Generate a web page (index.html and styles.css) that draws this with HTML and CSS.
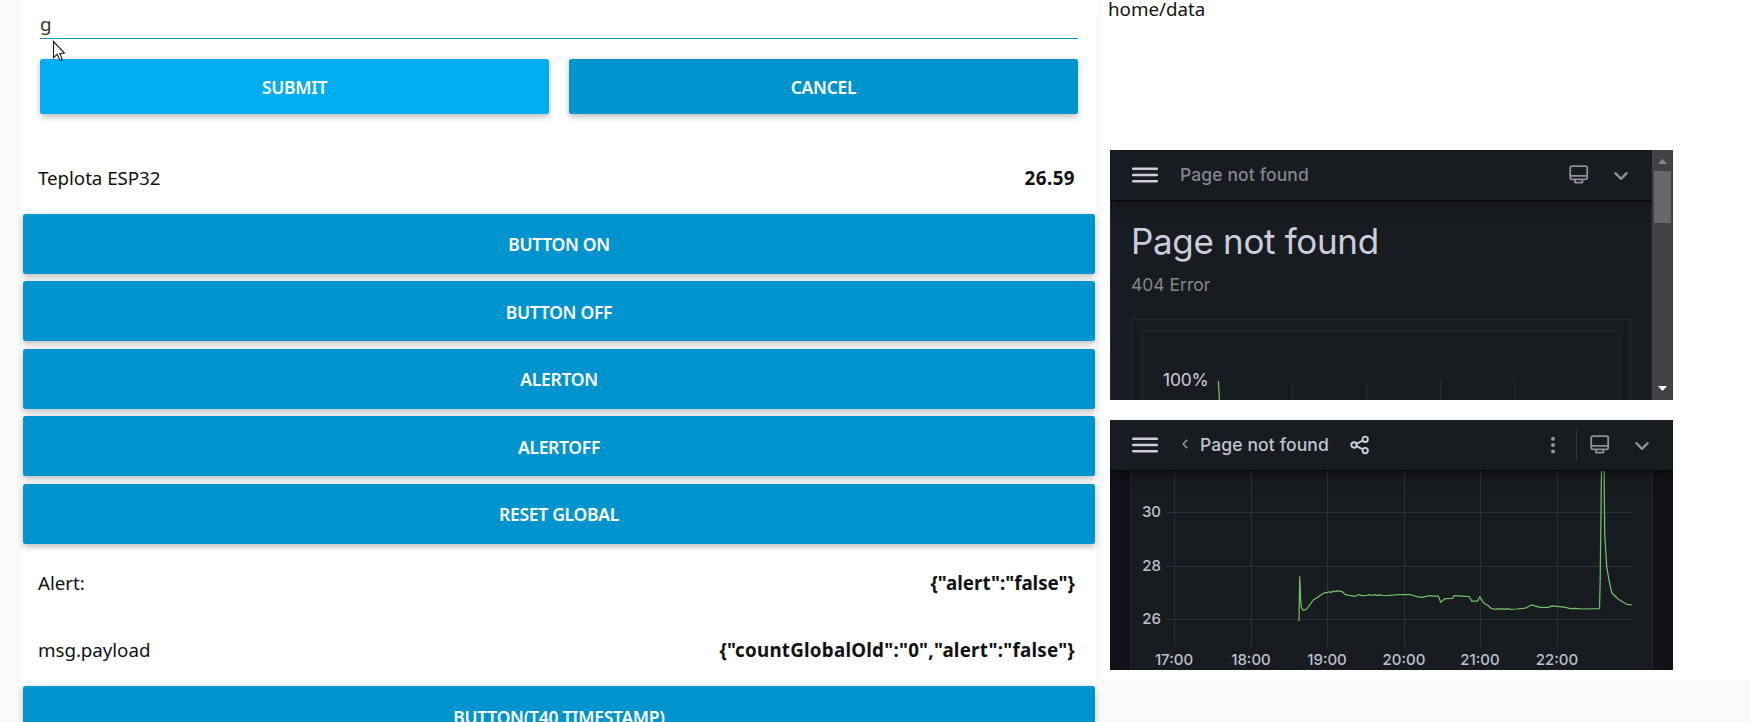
FILE: index.html
```html
<!DOCTYPE html>
<html lang="en">
<head>
<meta charset="utf-8">
<title>Dashboard</title>
<link rel="stylesheet" href="styles.css">
</head>
<body>
<main class="dashboard">
  <section class="group controls">
    <form class="form">
      <div class="field"><span class="field-value">g</span></div>
      <div class="form-actions">
        <button type="button" class="btn btn-hover">SUBMIT</button>
        <button type="button" class="btn">CANCEL</button>
      </div>
    </form>
    <div class="row"><span class="label">Teplota ESP32</span><b class="value num">26.59</b></div>
    <button class="btn wide">BUTTON ON</button>
    <button class="btn wide">BUTTON OFF</button>
    <button class="btn wide">ALERTON</button>
    <button class="btn wide">ALERTOFF</button>
    <button class="btn wide">RESET GLOBAL</button>
    <div class="row"><span class="label">Alert:</span><b class="value">{"alert":"false"}</b></div>
    <div class="row"><span class="label">msg.payload</span><b class="value payload">{"countGlobalOld":"0","alert":"false"}</b></div>
    <button class="btn wide">BUTTON(T40 TIMESTAMP)</button>
  </section>

  <section class="group frames">
    <div class="topic">home/data</div>

    <div class="frame">
      <div class="view view-error">
        <header class="bar">
          <svg class="menu" viewBox="0 0 26 18"><path d="M1.2 2.8H24.8M1.2 9H24.8M1.2 15.2H24.8"/></svg>
          <span class="crumb muted">Page not found</span>
          <span class="spacer"></span>
          <svg class="monitor" viewBox="0 0 20 20"><rect x="1.2" y="1.2" width="17" height="13.2" rx="1.8"/><path d="M1.2 10.8H18.2M6 14.4V17.6H13.4V14.4"/></svg>
          <svg class="chevron" viewBox="0 0 16 12"><path d="M2.4 3.2L8 8.8L13.6 3.2"/></svg>
        </header>
        <div class="error-body">
          <h1 class="error-title">Page not found</h1>
          <p class="error-code">404 Error</p>
          <div class="outer-box">
            <div class="inner-box">
              <svg class="mini-chart" viewBox="1143 331 476 69">
                <text x="1163" y="386">100%</text>
                <path class="mini-grid" d="M1292.3 381V400M1366.5 381V400M1440.5 381V400M1515 381V400"/>
                <path class="mini-line" d="M1218.4 381L1219.4 400"/>
              </svg>
            </div>
          </div>
        </div>
      </div>
      <div class="scrollbar">
        <svg class="arrow" viewBox="0 0 21 21"><path fill="#868686" d="M6 14L10.5 9L15 14Z"/></svg>
        <div class="thumb"></div>
        <svg class="arrow arrow-down" viewBox="0 0 21 21"><path fill="#fff" d="M6 7L15 7L10.5 12Z"/></svg>
      </div>
    </div>

    <div class="frame">
      <div class="view view-chart">
        <header class="bar bar-chart">
          <svg class="menu" viewBox="0 0 26 18"><path d="M1.2 2.8H24.8M1.2 9H24.8M1.2 15.2H24.8"/></svg>
          <svg class="back" viewBox="0 0 8 12"><path d="M6.2 .8L2.2 5L6.2 9.2"/></svg>
          <span class="crumb">Page not found</span>
          <svg class="share" viewBox="0 0 20 20"><circle cx="4" cy="10" r="2.7"/><circle cx="15.2" cy="4.3" r="2.7"/><circle cx="15.2" cy="15.6" r="2.7"/><path d="M6.5 8.8L12.8 5.5M6.5 11.2L12.8 14.4"/></svg>
          <span class="spacer"></span>
          <svg class="dots" viewBox="0 0 6 20"><circle cx="3" cy="3.8" r="2"/><circle cx="3" cy="10" r="2"/><circle cx="3" cy="16.4" r="2"/></svg>
          <span class="divider"></span>
          <svg class="monitor" viewBox="0 0 20 20"><rect x="1.2" y="1.2" width="17" height="13.2" rx="1.8"/><path d="M1.2 10.8H18.2M6 14.4V17.6H13.4V14.4"/></svg>
          <svg class="chevron" viewBox="0 0 16 12"><path d="M2.4 3.2L8 8.8L13.6 3.2"/></svg>
        </header>
        <svg class="chart" viewBox="1110 471 563 199">
          <rect class="chart-panel" x="1130.5" y="460" width="522" height="230"/>
          <path class="grid" d="M1167 512.5H1632M1167 566.5H1632M1167 619.5H1632M1174.5 471V647M1251.5 471V647M1327.5 471V647M1404.5 471V647M1480.5 471V647M1557.5 471V647"/>
          <g class="y-labels">
            <text x="1161" y="517">30</text><text x="1161" y="571">28</text><text x="1161" y="624">26</text>
          </g>
          <g class="x-labels">
            <text x="1174" y="665">17:00</text><text x="1251" y="665">18:00</text><text x="1327" y="665">19:00</text><text x="1404" y="665">20:00</text><text x="1480" y="665">21:00</text><text x="1557" y="665">22:00</text>
          </g>
          <polyline class="series" points="1299,621 1299.7,576.7 1300.7,600 1301.3,607.3 1303.3,610.5 1306.7,609 1310,604.5 1313.3,600 1317,597.8 1320,595.5 1325,592.5 1327,592.8 1329,591.8 1331.7,592.3 1333,591 1335,591.6 1337,590.8 1341.7,591.3 1345,594.3 1349,595.3 1355,596.3 1358.3,594.7 1362,595.6 1366.7,595.5 1369,594.6 1371,595.5 1374,594.6 1377,595.3 1380,594.8 1383,595.5 1390,595.3 1398,594.5 1410,594.5 1416,596.3 1421.7,597.3 1430,595.7 1433,596.2 1438.3,596 1440.7,602.3 1445,598.7 1452.7,598.3 1454,595.7 1469.3,596.7 1471.7,601 1477.7,601 1479.7,596.7 1484,603.3 1488,605.5 1491.7,608.7 1496,609.3 1498,608.7 1500,609.4 1502,608.7 1505,609.3 1507,608.7 1510,609.4 1516.7,609 1526,608 1531.7,604.8 1540,607.3 1548.3,607.3 1552.3,605.9 1565.7,607.3 1570,608.7 1575,608.4 1583,609 1599.5,608.7 1600.2,580 1601.6,460 1604,460 1604.7,533 1606.7,566.7 1609,580 1611.7,592.7 1615,596 1618.3,599.3 1626.7,604.3 1631.7,604.8"/>
        </svg>
      </div>
    </div>
  </section>
</main>
<svg class="pointer" viewBox="0 0 14 22"><path d="M1.5 1.5V17.8L5.2 14.3L7.8 20H9.8V18L7.8 13.5L12.4 13.1Z"/></svg>
</body>
</html>
```
FILE: styles.css
```css
* { box-sizing: border-box; }
body {
  margin: 0;
  height: 722px;
  overflow: hidden;
  background: #fafafa;
  color: #111;
  font-family: "Noto Sans", "Open Sans", sans-serif;
  font-size: 18.75px;
}
svg { display: block; flex: none; fill: none; }
.dashboard {
  display: flex;
  align-items: flex-start;
  gap: 6px;
  height: 722px;
  padding-left: 22px;
  overflow: hidden;
}
.group { background: #fff; }
.controls {
  flex: none;
  display: flex;
  flex-direction: column;
  gap: 7.5px;
  width: 1074px;
  height: 760px;
  padding: 0 1px;
}
.form { height: 138.75px; padding: 0 17px; }
.field {
  height: 39px;
  padding-top: 11px;
  border-bottom: 1px solid #0094ce;
  color: #333;
  line-height: 25px;
}
.form-actions { display: flex; gap: 20px; margin-top: 20px; }
.btn {
  flex: 1;
  height: 55px;
  padding: 0;
  border: 0;
  border-radius: 2.5px;
  background: #0094ce;
  box-shadow: 0 2.5px 6px rgba(0, 0, 0, .26);
  color: #fff;
  font: 600 17.5px/24px "Noto Sans", "Open Sans", sans-serif;
  letter-spacing: -.3px;
}
.btn-hover { background: #03adf3; }
.btn.wide { flex: none; height: 60px; padding-top: 1px; }
.row {
  display: flex;
  align-items: center;
  justify-content: space-between;
  flex: none;
  height: 60px;
  padding: 2px 20px 0 15px;
}
.label { letter-spacing: -.05px; }
.value { font-weight: 700; }
.num { letter-spacing: .45px; }
.payload { letter-spacing: .24px; }

.frames { flex: 1; height: 680px; padding-left: 6px; }
.topic { height: 150px; line-height: 18px; }
.frame {
  display: flex;
  width: 563px;
  height: 250px;
  margin: 0 0 20px 2px;
  overflow: hidden;
  font-family: Inter, sans-serif;
  font-size: 17.5px;
}
.view { flex: 1; overflow: hidden; background: #181b1f; color: #ccccdc; }
.view-chart { background: #111217; }
.bar {
  position: relative;
  display: flex;
  align-items: center;
  height: 51px;
  padding: 0 23px 1px 22px;
  background: #181b1f;
  border-bottom: 1px solid #07080a;
  box-shadow: 0 2px 12px rgba(0, 0, 0, .5);
}
.menu { width: 26px; height: 18px; margin-right: 21px; stroke: #ccccdc; stroke-width: 2.5; stroke-linecap: round; }
.crumb { color: #c2c3d0; font-weight: 500; letter-spacing: .12px; white-space: nowrap; }
.muted { margin-left: 1px; color: #84858f; }
.spacer { flex: 1; }
.monitor { width: 20px; height: 20px; margin-right: 24.5px; stroke: #8e8f9b; stroke-width: 1.8; stroke-linejoin: round; }
.chevron { width: 16px; height: 12px; margin-top: 2px; stroke: #8e8f9b; stroke-width: 2.4; stroke-linecap: round; stroke-linejoin: round; }
.back { width: 8px; height: 12px; margin: 0 11px 0 2px; stroke: #9899a5; stroke-width: 1.5; }
.share { width: 20px; height: 20px; margin-left: 21px; stroke: #ccccdc; stroke-width: 1.9; }
.dots { width: 6px; height: 20px; fill: #9394a0; }
.divider { width: 1px; height: 30px; margin: 0 12.5px 0 20px; background: #34363b; }
.error-body {
  height: 199px;
  padding: 19px 20px 0;
  border: solid #23252b;
  border-width: 0 1px;
}
.error-title { margin: 0; font-size: 35px; font-weight: 400; line-height: 42px; letter-spacing: -.33px; }
.error-code { margin: 12px 0 23px; color: #84858f; line-height: 22px; }
.outer-box { height: 100px; padding: 10px 10px 0; border: 1px solid #25282c; }
.inner-box { height: 100px; border: 1px solid #25282c; border-radius: 3px; }
.mini-chart { width: 476px; height: 69px; }
.mini-chart text { fill: #ccccdc; font-size: 17.5px; letter-spacing: -.2px; }
.mini-grid { stroke: #2a2d31; }
.mini-line { stroke: #73bf69; stroke-width: 1.3; }
.scrollbar { width: 21px; background: #424242; display: flex; flex-direction: column; }
.arrow { width: 21px; height: 21px; }
.arrow-down { margin-top: auto; }
.thumb { width: 17px; height: 52px; margin-left: 2px; background: #686868; }

.chart { width: 563px; height: 199px; }
.chart-panel { fill: #181b1f; stroke: #25272c; }
.grid { stroke: #2d3033; }
.chart text { fill: #bfc0ce; font-size: 15px; font-weight: 500; }
.y-labels { text-anchor: end; }
.x-labels { text-anchor: middle; }
.series { stroke: #73bf69; stroke-width: 1.25; stroke-linejoin: round; }

.pointer { position: absolute; left: 52px; top: 40px; width: 14px; height: 22px; fill: #fff; stroke: #181828; stroke-width: 1.1; }
```
